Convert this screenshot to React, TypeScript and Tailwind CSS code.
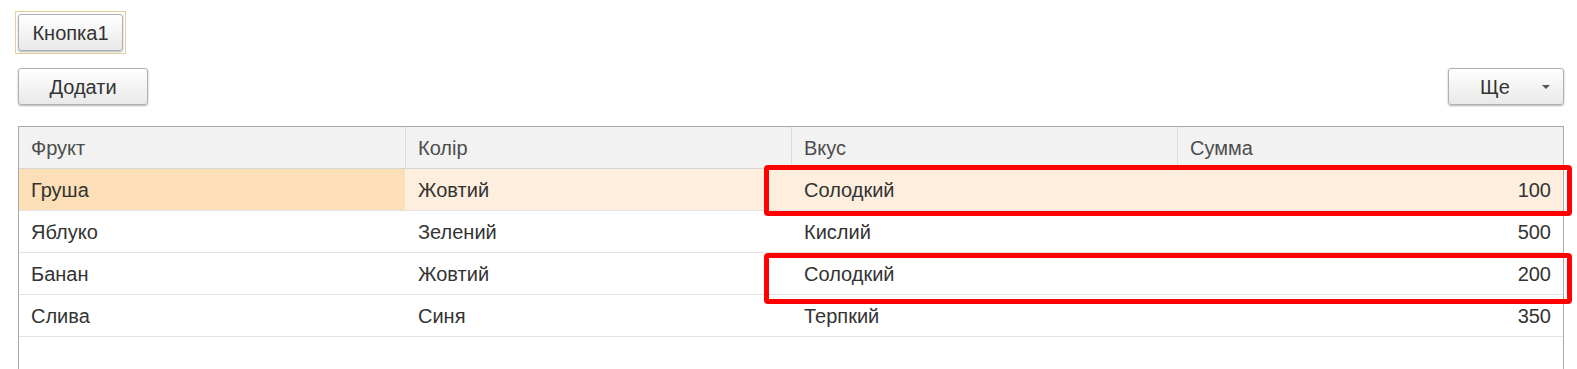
import { useState } from "react";

const rows = [
  { fruit: "Груша", color: "Жовтий", taste: "Солодкий", sum: 100 },
  { fruit: "Яблуко", color: "Зелений", taste: "Кислий", sum: 500 },
  { fruit: "Банан", color: "Жовтий", taste: "Солодкий", sum: 200 },
  { fruit: "Слива", color: "Синя", taste: "Терпкий", sum: 350 },
];

const btn =
  "h-[37px] rounded-[3px] border border-[#b0b0b0] bg-gradient-to-b from-white to-[#e9e9e9] shadow-[0_1px_2px_rgba(0,0,0,0.3)] text-[#333] text-[20px] leading-none";

const App = () => {
  const [current] = useState(0);

  return (
    <div className="relative w-[1577px] h-[369px] overflow-hidden bg-white pl-[18px] pr-[13px] pt-[11px] font-['Liberation_Sans',Arial,sans-serif]">
      <div className="-ml-[3px] flex w-fit border border-[#e6cf9c] p-[2px]">
        <button className={`${btn} w-[105px]`}>Кнопка1</button>
      </div>

      <div className="mt-[14px] flex items-center justify-between">
        <button className={`${btn} w-[130px]`}>Додати</button>
        <button className={`${btn} w-[116px] flex items-center pl-[31px] pr-[13px]`}>
          <span className="flex-1 text-left">Ще</span>
          <span className="w-0 h-0 border-l-[4px] border-r-[4px] border-t-[4px] border-l-transparent border-r-transparent border-t-[#555]" />
        </button>
      </div>

      <div className="mt-[21px] border border-[#a9a9a9] h-[260px]">
        <div className="grid grid-cols-4 h-[42px] bg-[#f2f2f2] border-b border-[#d6d6d6] text-[#4d4d4d] text-[20px]">
          {["Фрукт", "Колір", "Вкус", "Сумма"].map((h, i) => (
            <div
              key={h}
              className={`flex items-center pl-[12px] ${i > 0 ? "border-l border-[#dadada]" : ""}`}
            >
              {h}
            </div>
          ))}
        </div>
        {rows.map((r, idx) => {
          const sel = idx === current;
          const cells = [r.fruit, r.color, r.taste, String(r.sum)];
          return (
            <div
              key={r.fruit}
              className={`grid grid-cols-4 h-[42px] border-b border-[#e3e3e3] text-[#333] text-[20px] ${sel ? "bg-[#fdeedd]" : ""}`}
            >
              {cells.map((c, i) => (
                <div
                  key={i}
                  className={`flex items-center ${i === 3 ? "justify-end pr-[12px]" : "pl-[12px]"} ${
                    i > 0 ? `border-l ${sel ? "border-[#f7f2ec]" : "border-transparent"}` : ""
                  } ${sel && i === 0 ? "bg-[#fcdfb7]" : ""}`}
                >
                  {c}
                </div>
              ))}
            </div>
          );
        })}
      </div>

      <div className="absolute left-[764px] top-[165px] w-[808px] h-[51px] border-[5px] border-[#f00] rounded-[4px]" />
      <div className="absolute left-[764px] top-[253px] w-[808px] h-[51px] border-[5px] border-[#f00] rounded-[4px]" />
    </div>
  );
};

export default App;
